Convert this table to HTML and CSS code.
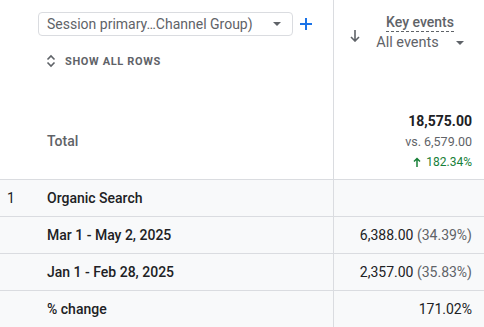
FILE: index.html
```html
<!DOCTYPE html>
<html>
<head>
<meta charset="utf-8">
<link rel="stylesheet" href="styles.css">
</head>
<body>
<div class="table">
  <div class="cell head-left">
    <div class="dim-row">
      <div class="dim-select">
        <span class="dim-text">Session primary…Channel Group)</span>
        <span class="caret"></span>
      </div>
      <svg class="plus" width="12" height="12" viewBox="0 0 12 12"><path d="M6 0v12M0 6h12" stroke="#1a73e8" stroke-width="2"/></svg>
    </div>
    <div class="show-all">
      <svg width="10" height="14" viewBox="0 0 10 14"><path d="M1.5 5.5L5 2l3.5 3.5M1.5 8.5L5 12l3.5-3.5" fill="none" stroke="#5f6368" stroke-width="1.6"/></svg>
      <span>SHOW ALL ROWS</span>
    </div>
  </div>
  <div class="cell head-right">
    <svg class="sort" width="10" height="12" viewBox="0 0 10 12"><path d="M5 0v11M1 7l4 4 4-4" fill="none" stroke="#5f6368" stroke-width="1.6"/></svg>
    <div class="metric">
      <span class="metric-name">Key events</span>
      <div class="metric-sel"><span>All events</span><span class="caret"></span></div>
    </div>
  </div>

  <div class="cell total-left"><span class="total-label">Total</span></div>
  <div class="cell total-right">
    <div class="total-main">18,575.00</div>
    <div class="total-vs">vs. 6,579.00</div>
    <div class="total-up">
      <svg width="8" height="10" viewBox="0 0 8 10"><path d="M4 10V1.5M1 4.5l3-3 3 3" fill="none" stroke="#188038" stroke-width="1.5"/></svg>
      <span>182.34%</span>
    </div>
  </div>

  <div class="cell row-left"><span class="idx">1</span><span class="label">Organic Search</span></div>
  <div class="cell row-right"></div>

  <div class="cell row-left"><span class="idx"></span><span class="label">Mar 1 - May 2, 2025</span></div>
  <div class="cell row-right">6,388.00 <span class="pct">(34.39%)</span></div>

  <div class="cell row-left"><span class="idx"></span><span class="label">Jan 1 - Feb 28, 2025</span></div>
  <div class="cell row-right">2,357.00 <span class="pct">(35.83%)</span></div>

  <div class="cell row-left"><span class="idx"></span><span class="label">% change</span></div>
  <div class="cell row-right">171.02%</div>
</div>
</body>
</html>
```
FILE: styles.css
```css
* { box-sizing: border-box; }
html, body { margin: 0; padding: 0; background: #fff; }
body { font-family: Roboto, "Liberation Sans", sans-serif; color: #202124; font-size: 14px; }

.table {
  display: grid;
  grid-template-columns: 334px 150px;
  grid-template-rows: 100px 79px 37px 37px 37px 37px;
}
.cell { border-right: 1px solid #dadce0; }
.cell:nth-child(2n) { border-right: none; }

.head-left { padding: 12px 0 0 38px; }
.dim-row { display: flex; align-items: center; gap: 7px; }
.dim-select {
  width: 255px; height: 24px;
  border: 1px solid #dadce0; border-radius: 4px;
  display: flex; align-items: center;
  padding: 0 0 0 8px;
}
.dim-text { color: #5f6368; font-size: 14px; width: 226px; white-space: nowrap; }
.caret {
  width: 0; height: 0;
  border-left: 4px solid transparent; border-right: 4px solid transparent;
  border-top: 4px solid #5f6368;
  display: inline-block;
}
.plus { display: block; }

.show-all {
  display: flex; align-items: center; gap: 9px;
  margin: 18px 0 0 8px;
  color: #5f6368; font-size: 11px; font-weight: 700; letter-spacing: 0.65px;
}
.show-all svg { display: block; }

.head-right { display: flex; align-items: flex-start; padding: 13px 0 0 16px; }
.sort { margin-top: 17px; display: block; }
.metric { display: flex; flex-direction: column; align-items: center; margin-left: 16px; width: 88px; }
.metric-name {
  color: #5f6368; font-weight: 500; font-size: 14px; line-height: 18px;
  border-bottom: 1px dashed #5f6368;
}
.metric-sel { display: flex; align-items: center; gap: 17px; color: #5f6368; font-size: 14.5px; line-height: 22px; }

.total-left { display: flex; align-items: center; padding: 3px 0 0 47px; }
.total-label { color: #5f6368; font-weight: 500; font-size: 14px; }
.total-right { display: flex; flex-direction: column; align-items: flex-end; padding: 11px 12px 0 0; }
.total-main { font-weight: 700; font-size: 14px; line-height: 20px; color: #202124; }
.total-vs { font-size: 12.5px; line-height: 21px; color: #5f6368; }
.total-up { font-size: 12px; line-height: 20px; color: #188038; display: flex; align-items: center; gap: 5px; }
.total-up svg { display: block; }

.row-left, .row-right {
  background: #f8f9fa;
  border-top: 1px solid #dadce0;
  display: flex; align-items: center;
}
.row-left { padding-left: 7px; }
.idx { width: 40px; color: #202124; }
.label { font-weight: 500; color: #202124; }
.row-right { justify-content: flex-end; padding-right: 12px; color: #202124; white-space: pre; }
.pct { color: #5f6368; }
```
